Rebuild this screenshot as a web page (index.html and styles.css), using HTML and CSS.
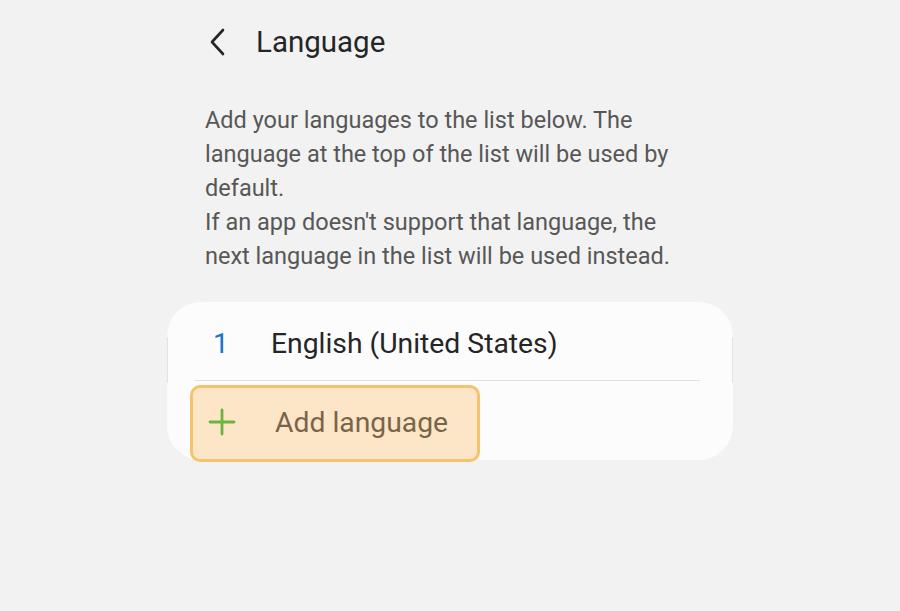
FILE: index.html
```html
<!DOCTYPE html>
<html lang="en">
<head>
  <meta charset="UTF-8" />
  <meta name="viewport" content="width=device-width, initial-scale=1.0"/>
  <title>Language</title>
  <link rel="stylesheet" href="styles.css">
</head>
<body>
  <div class="screen">
    <div class="header">
      <svg class="back" width="18" height="30" viewBox="0 0 18 30">
        <polyline points="14,3 3,15 14,27" fill="none" stroke="#252525" stroke-width="2.6" stroke-linecap="round" stroke-linejoin="round"/>
      </svg>
      <h1>Language</h1>
    </div>

    <p class="intro">
      Add your languages to the list below. The language at the top of the list will be used by default.<br>
      If an app doesn't support that language, the next language in the list will be used instead.
    </p>

    <div class="card">
      <div class="lang-row">
        <span class="num">1</span>
        <span class="lang-name">English (United States)</span>
      </div>
      <div class="add-row">
        <div class="add-btn">
          <svg width="28" height="28" viewBox="0 0 28 28">
            <path d="M14 2 V26 M2 14 H26" stroke="#6cb33f" stroke-width="2.8" stroke-linecap="round"/>
          </svg>
          <span>Add language</span>
        </div>
      </div>
    </div>
  </div>
</body>
</html>
```

FILE: styles.css
```css
body {
  margin: 0;
  background: #f2f2f2;
  font-family: Roboto, 'Noto Sans', sans-serif;
  height: 611px;
  overflow: hidden;
}
.screen {
  width: 566px;
  margin-left: 167px;
}
.header {
  display: flex;
  align-items: center;
  height: 84px;
  padding-left: 42px;
}
.back {
  display: block;
}
h1 {
  margin: 0 0 0 29px;
  font-size: 29.5px;
  font-weight: 400;
  color: #252525;
}
.intro {
  margin: 19px 0 0 38px;
  width: 475px;
  font-size: 23.5px;
  line-height: 34px;
  color: #575757;
}
.card {
  margin-top: 29px;
  height: 158px;
  border-radius: 34px;
  background:
    linear-gradient(#e3e3e3, #e3e3e3) left 35px / 1px 46px no-repeat,
    linear-gradient(#e3e3e3, #e3e3e3) right 35px / 1px 46px no-repeat,
    #fcfcfc;
}
.lang-row {
  display: flex;
  align-items: center;
  box-sizing: border-box;
  height: 79px;
  padding-top: 4px;
  margin: 0 33px 0 28px;
  border-bottom: 1px solid #e2e2e2;
}
.num {
  width: 16px;
  margin-left: 18px;
  font-size: 28px;
  color: #1a74c9;
}
.lang-name {
  margin-left: 42px;
  font-size: 28.3px;
  color: #252525;
}
.add-row {
  padding: 4px 0 0 23px;
}
.add-btn {
  display: flex;
  align-items: center;
  box-sizing: border-box;
  width: 290px;
  height: 77px;
  background: #fde6c8;
  border: 3px solid #f6c26e;
  border-radius: 10px;
  padding: 0 0 3px 15px;
}
.add-btn svg {
  display: block;
}
.add-btn span {
  margin-left: 39px;
  font-size: 28.3px;
  color: #7a6447;
}
```
